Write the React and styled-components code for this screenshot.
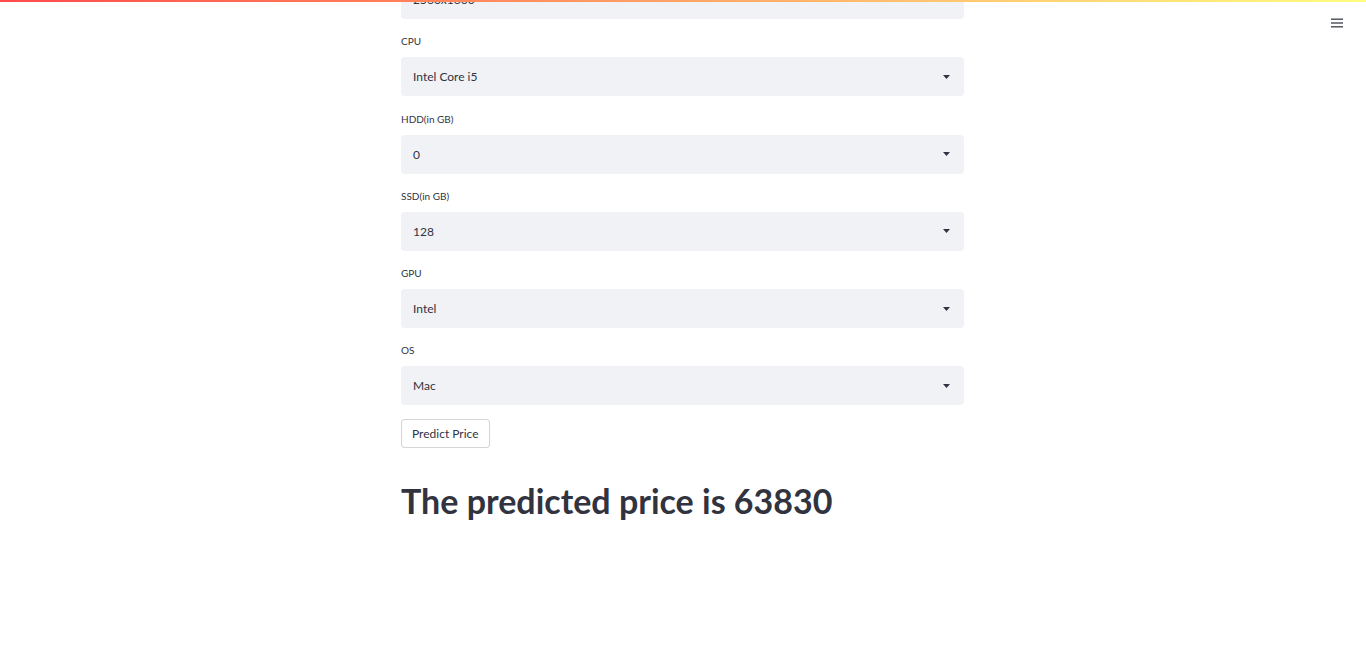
import React from "react";
import styled, { createGlobalStyle } from "styled-components";

const GlobalStyle = createGlobalStyle`
  html, body { margin: 0; padding: 0; background: #ffffff; overflow: hidden; }
  body { font-family: Lato, "Noto Sans", sans-serif; color: #31333f; }
`;

const Decoration = styled.div`
  position: fixed;
  top: 0;
  left: 0;
  right: 0;
  height: 2px;
  z-index: 10;
  background: linear-gradient(90deg, rgb(255, 75, 75), rgb(255, 253, 128));
`;

const MenuButton = styled.button`
  position: fixed;
  top: 12px;
  right: 18px;
  width: 22px;
  height: 22px;
  padding: 0;
  border: none;
  background: transparent;
  display: flex;
  align-items: center;
  justify-content: center;
  color: #31333f;
`;

const Main = styled.main`
  width: 563px;
  margin: -20px 0 0 calc(50% - 282px);
  display: flex;
  flex-direction: column;
  gap: 13.25px;
`;

const Field = styled.div`
  display: flex;
  flex-direction: column;
`;

const Label = styled.label`
  font-size: 10px;
  line-height: 18px;
  margin-bottom: 7px;
  color: #31333f;
`;

const Select = styled.div`
  height: 39px;
  box-sizing: border-box;
  background: #f0f2f6;
  border-radius: 4px;
  display: flex;
  align-items: center;
  justify-content: space-between;
  padding: 0 14px 0 12px;
  font-size: 12px;
  color: #31333f;
`;

const Caret = styled.svg`
  width: 7px;
  height: 4px;
  flex: none;
`;

const Button = styled.button`
  align-self: flex-start;
  height: 29px;
  padding: 0 10px;
  background: #fff;
  border: 1px solid rgba(49, 51, 63, 0.2);
  border-radius: 4px;
  font-family: inherit;
  font-size: 12px;
  color: #31333f;
`;

const Heading = styled.h2`
  margin: 20px 0 0;
  font-size: 34px;
  line-height: 40px;
  font-weight: 700;
  color: #31333f;
`;

const fields = [
  { label: "Screen Resolution", value: "2560x1600", hideLabel: true },
  { label: "CPU", value: "Intel Core i5" },
  { label: "HDD(in GB)", value: "0" },
  { label: "SSD(in GB)", value: "128" },
  { label: "GPU", value: "Intel" },
  { label: "OS", value: "Mac" },
];

function SelectBox({ value }) {
  return (
    <Select>
      <span>{value}</span>
      <Caret viewBox="0 0 7 4">
        <path d="M0 0 H7 L3.5 4 Z" fill="#31333f" />
      </Caret>
    </Select>
  );
}

export default function App() {
  return (
    <>
      <GlobalStyle />
      <Decoration />
      <MenuButton aria-label="menu">
        <svg width="12" height="10" viewBox="0 0 12 10">
          <rect x="0" y="0.5" width="12" height="1.4" fill="#4a4c56" />
          <rect x="0" y="4.3" width="12" height="1.4" fill="#4a4c56" />
          <rect x="0" y="8.1" width="12" height="1.4" fill="#4a4c56" />
        </svg>
      </MenuButton>
      <Main>
        {fields.map((f) => (
          <Field key={f.label}>
            {!f.hideLabel && <Label>{f.label}</Label>}
            <SelectBox value={f.value} />
          </Field>
        ))}
        <Button>Predict Price</Button>
        <Heading>The predicted price is 63830</Heading>
      </Main>
    </>
  );
}
